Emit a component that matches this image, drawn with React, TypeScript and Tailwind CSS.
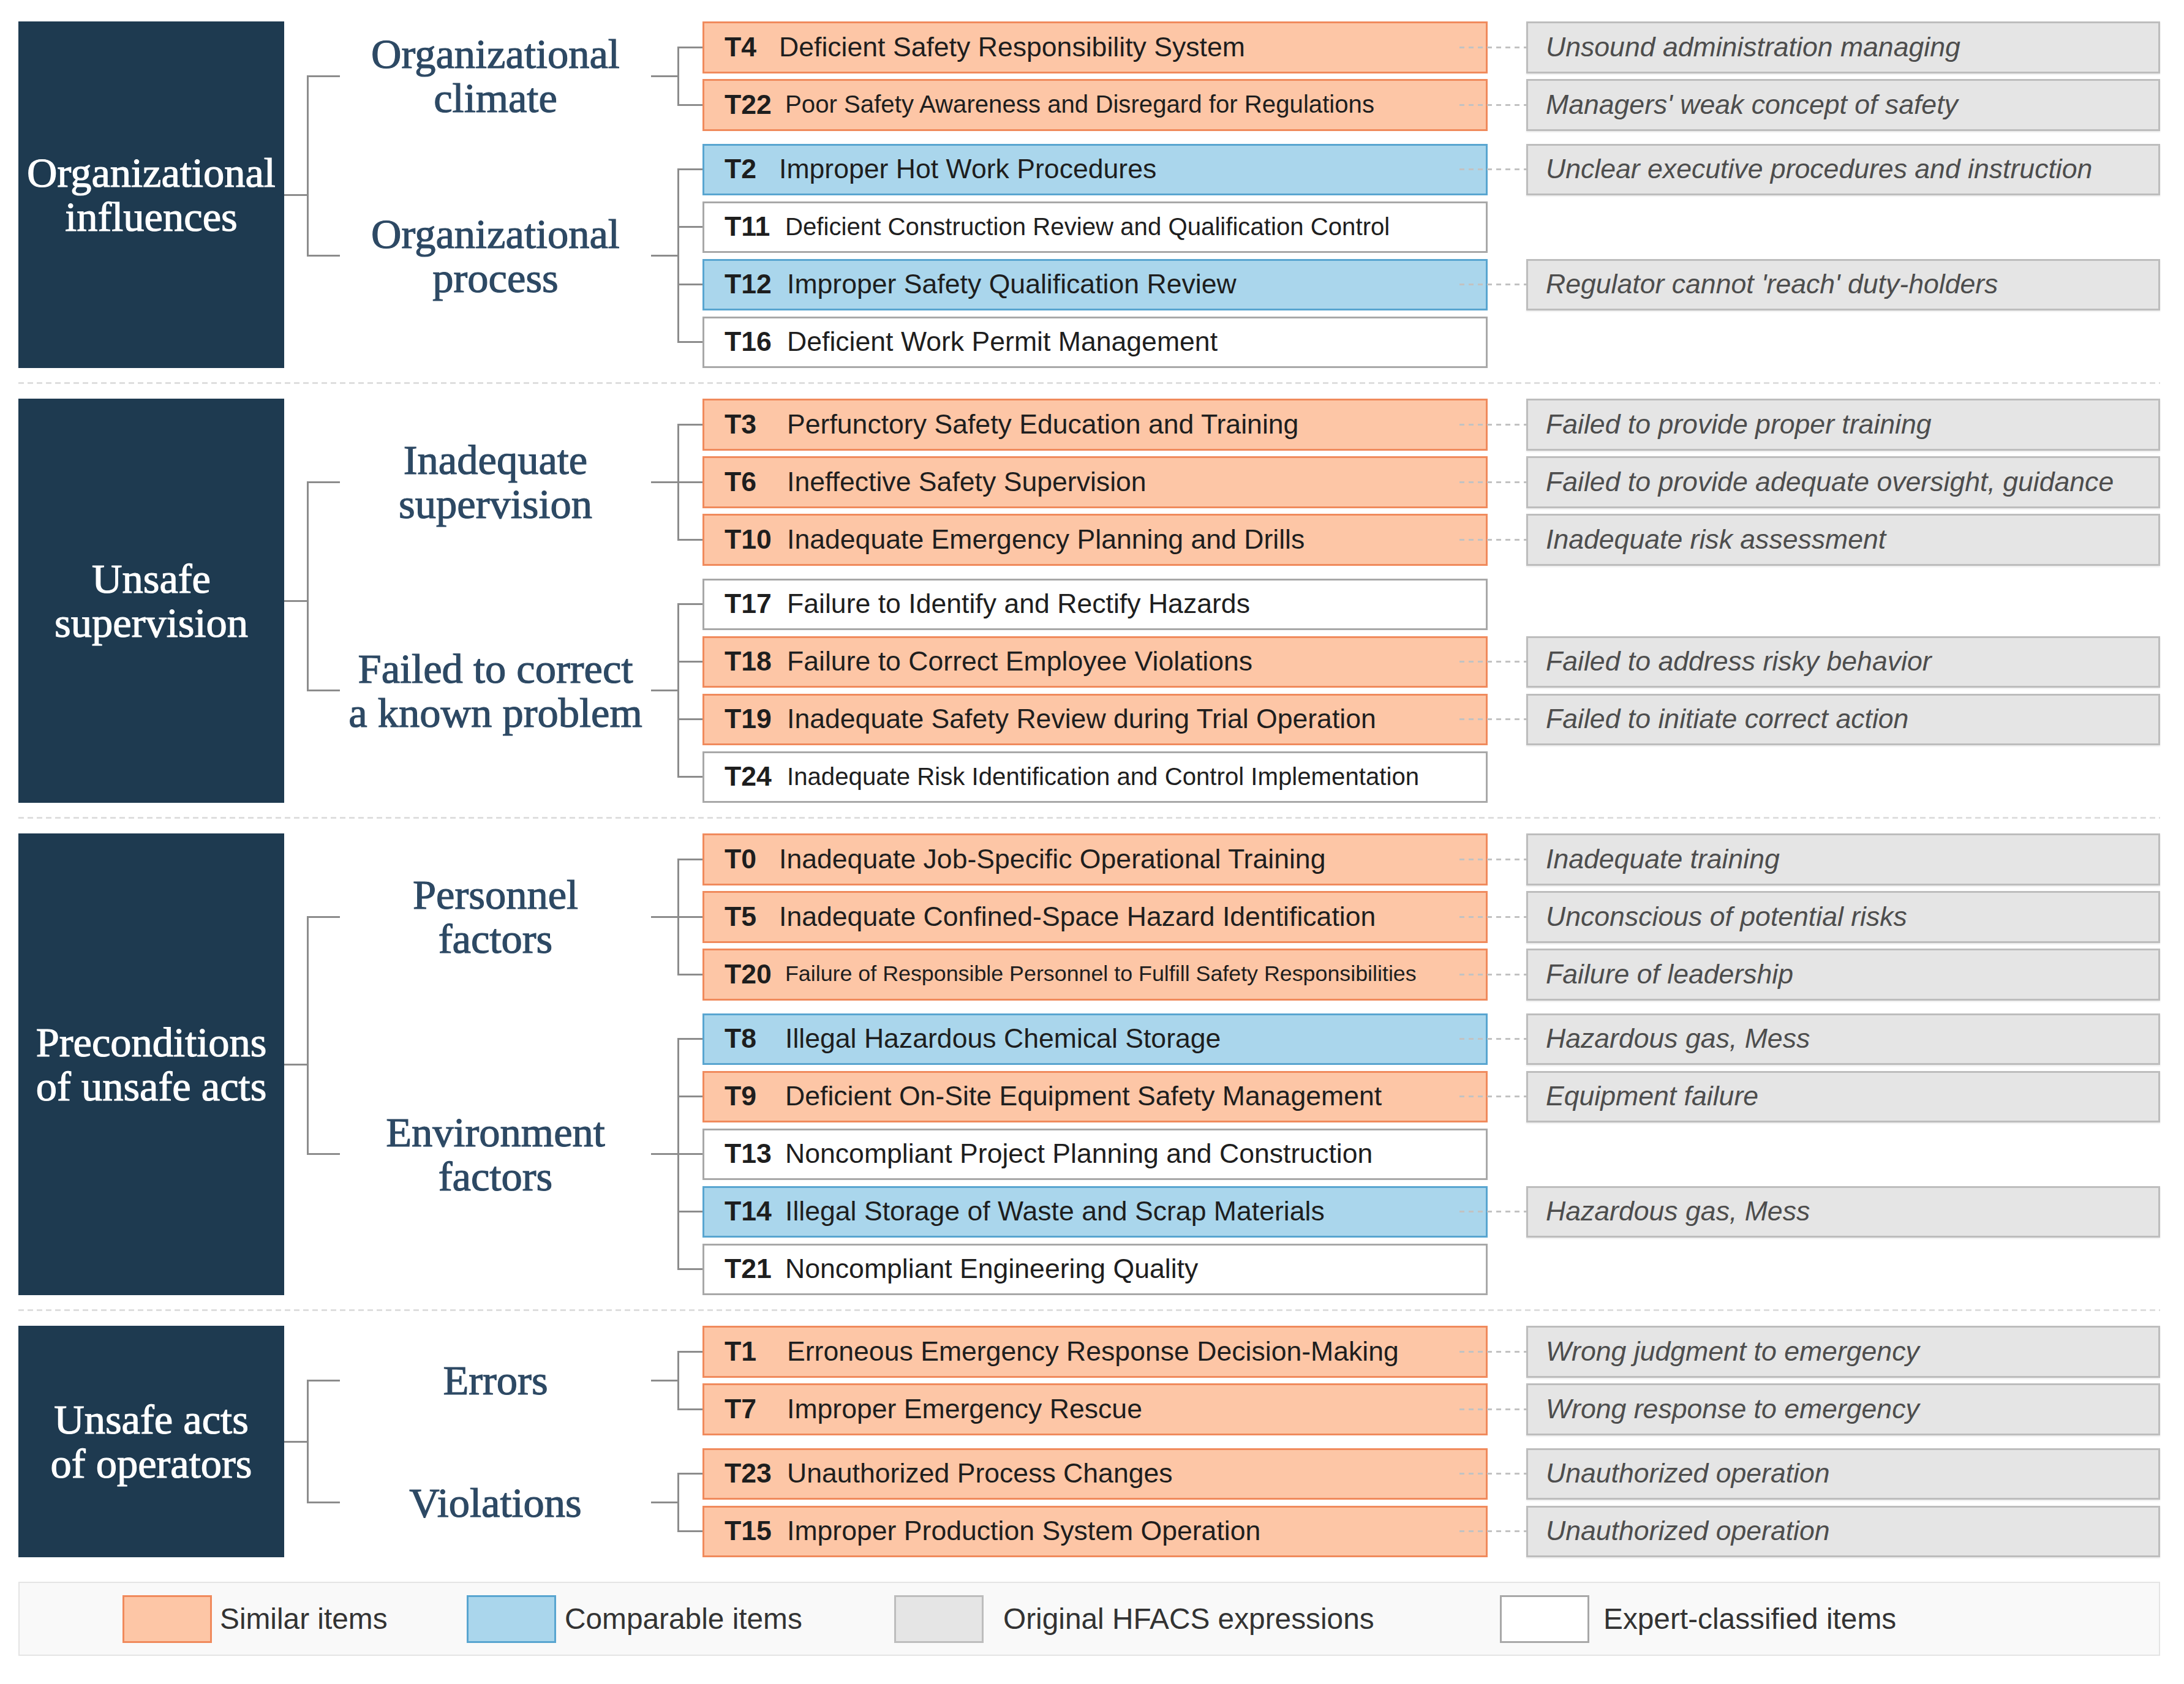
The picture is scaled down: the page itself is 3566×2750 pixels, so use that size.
import React from 'react'

type Kind = 'o' | 'b' | 'w'

interface Item {
  code: string
  text: string
  kind: Kind
  note?: string
  size?: 'md' | 'sm' | 'xs'
  pad?: 'a' | 'b' | 'c'
}

interface Group {
  label: string[]
  items: Item[]
}

interface Section {
  title: string[]
  groups: Group[]
}

const SECTIONS: Section[] = [
  {
    title: ['Organizational', 'influences'],
    groups: [
      {
        label: ['Organizational', 'climate'],
        items: [
          { code: 'T4', text: 'Deficient Safety Responsibility System', kind: 'o', note: 'Unsound administration managing', pad: 'a' },
          { code: 'T22', text: 'Poor Safety Awareness and Disregard for Regulations', kind: 'o', note: "Managers' weak concept of safety", size: 'sm', pad: 'b' },
        ],
      },
      {
        label: ['Organizational', 'process'],
        items: [
          { code: 'T2', text: 'Improper Hot Work Procedures', kind: 'b', note: 'Unclear executive procedures and instruction', pad: 'a' },
          { code: 'T11', text: 'Deficient Construction Review and Qualification Control', kind: 'w', size: 'sm', pad: 'b' },
          { code: 'T12', text: 'Improper Safety Qualification Review', kind: 'b', note: "Regulator cannot 'reach' duty-holders" },
          { code: 'T16', text: 'Deficient Work Permit Management', kind: 'w' },
        ],
      },
    ],
  },
  {
    title: ['Unsafe', 'supervision'],
    groups: [
      {
        label: ['Inadequate', 'supervision'],
        items: [
          { code: 'T3', text: 'Perfunctory Safety Education and Training', kind: 'o', note: 'Failed to provide proper training' },
          { code: 'T6', text: 'Ineffective Safety Supervision', kind: 'o', note: 'Failed to provide adequate oversight, guidance' },
          { code: 'T10', text: 'Inadequate Emergency Planning and Drills', kind: 'o', note: 'Inadequate risk assessment' },
        ],
      },
      {
        label: ['Failed to correct', 'a known problem'],
        items: [
          { code: 'T17', text: 'Failure to Identify and Rectify Hazards', kind: 'w' },
          { code: 'T18', text: 'Failure to Correct Employee Violations', kind: 'o', note: 'Failed to address risky behavior' },
          { code: 'T19', text: 'Inadequate Safety Review during Trial Operation', kind: 'o', note: 'Failed to initiate correct action' },
          { code: 'T24', text: 'Inadequate Risk Identification and Control Implementation', kind: 'w', size: 'sm' },
        ],
      },
    ],
  },
  {
    title: ['Preconditions', 'of unsafe acts'],
    groups: [
      {
        label: ['Personnel', 'factors'],
        items: [
          { code: 'T0', text: 'Inadequate Job-Specific Operational Training', kind: 'o', note: 'Inadequate training', pad: 'a' },
          { code: 'T5', text: 'Inadequate Confined-Space Hazard Identification', kind: 'o', note: 'Unconscious of potential risks', pad: 'a' },
          { code: 'T20', text: 'Failure of Responsible Personnel to Fulfill Safety Responsibilities', kind: 'o', note: 'Failure of leadership', size: 'xs', pad: 'b' },
        ],
      },
      {
        label: ['Environment', 'factors'],
        items: [
          { code: 'T8', text: 'Illegal Hazardous Chemical Storage', kind: 'b', note: 'Hazardous gas, Mess', pad: 'b' },
          { code: 'T9', text: 'Deficient On-Site Equipment Safety Management', kind: 'o', note: 'Equipment failure', pad: 'b' },
          { code: 'T13', text: 'Noncompliant Project Planning and Construction', kind: 'w', pad: 'b' },
          { code: 'T14', text: 'Illegal Storage of Waste and Scrap Materials', kind: 'b', note: 'Hazardous gas, Mess', pad: 'b' },
          { code: 'T21', text: 'Noncompliant Engineering Quality', kind: 'w', pad: 'b' },
        ],
      },
    ],
  },
  {
    title: ['Unsafe acts', 'of operators'],
    groups: [
      {
        label: ['Errors'],
        items: [
          { code: 'T1', text: 'Erroneous Emergency Response Decision-Making', kind: 'o', note: 'Wrong judgment to emergency' },
          { code: 'T7', text: 'Improper Emergency Rescue', kind: 'o', note: 'Wrong response to emergency' },
        ],
      },
      {
        label: ['Violations'],
        items: [
          { code: 'T23', text: 'Unauthorized Process Changes', kind: 'o', note: 'Unauthorized operation' },
          { code: 'T15', text: 'Improper Production System Operation', kind: 'o', note: 'Unauthorized operation' },
        ],
      },
    ],
  },
]

const BOX: Record<Kind, string> = {
  o: 'bg-[#fdc6a6] border-[#f08a5c]',
  b: 'bg-[#aad6ec] border-[#58a5d0]',
  w: 'bg-white border-[#a8a8a8]',
}

const SIZE = {
  md: 'text-[44.6px]',
  sm: 'text-[40.2px]',
  xs: 'text-[35.8px]',
}

const PAD = {
  a: 'w-[89px]',
  b: 'w-[99px]',
  c: 'w-[102px]',
}

const serif = "font-['Liberation_Serif','Times_New_Roman',serif]"
const sans = "font-['Liberation_Sans',Arial,sans-serif]"

// branch stub: vertical line on the left (top/bottom halves) and a horizontal tick at the middle
function Stub({ width, first, last }: { width: string; first: boolean; last: boolean }) {
  return (
    <div className={`${width} shrink-0 flex flex-col`}>
      <div className={`flex-1 ${first ? '' : 'border-l-[3px] border-[#8c8c8c]'}`} />
      <div className="h-[3px] bg-[#8c8c8c]" />
      <div className={`flex-1 ${last ? '' : 'border-l-[3px] border-[#8c8c8c]'}`} />
    </div>
  )
}

function ItemRow({ item, first, last }: { item: Item; first: boolean; last: boolean }) {
  return (
    <div className="flex">
      <Stub width="w-[41px]" first={first} last={last} />
      <div className="flex items-center py-[4.75px]">
        <div className={`w-[1282px] h-[84.5px] border-[3px] ${BOX[item.kind]} flex items-center pl-[33px] text-[#1e1e1e] whitespace-nowrap`}>
          <span className={`${PAD[item.pad ?? 'c']} shrink-0 font-bold text-[44.6px]`}>{item.code}</span>
          <span className={SIZE[item.size ?? 'md']}>{item.text}</span>
        </div>
        {item.note && (
          <>
            <div className="-ml-[46px] w-[109px] h-[3px] bg-[repeating-linear-gradient(90deg,#c2c2c2_0_8px,transparent_8px_15px)]" />
            <div className="w-[1035px] h-[84.5px] border-[3px] border-[#bdbdbd] bg-[#e5e5e5] flex items-center pl-[29px] italic text-[44.6px] text-[#4d4d4d] whitespace-nowrap shadow-[0_2px_2px_rgba(0,0,0,0.08)]">
              {item.note}
            </div>
          </>
        )}
      </div>
    </div>
  )
}

function GroupRow({ group, first, last }: { group: Group; first: boolean; last: boolean }) {
  return (
    <div className="flex">
      <Stub width="w-[54px]" first={first} last={last} />
      <div className={`w-[508px] shrink-0 flex flex-col items-center justify-center ${serif} text-[68.5px] leading-[72px] text-[#2d4964] [-webkit-text-stroke:1.2px_#2d4964]`}>
        {group.label.map(l => (
          <div key={l} className="whitespace-nowrap">{l}</div>
        ))}
      </div>
      <div className="w-[43px] shrink-0 flex items-center">
        <div className="w-full h-[3px] bg-[#8c8c8c]" />
      </div>
      <div className="flex flex-col py-[5.75px]">
        {group.items.map((item, i) => (
          <ItemRow key={item.code} item={item} first={i === 0} last={i === group.items.length - 1} />
        ))}
      </div>
    </div>
  )
}

function SectionBlock({ section }: { section: Section }) {
  return (
    <div className="flex">
      <div className={`w-[434px] shrink-0 bg-[#1e3a50] flex flex-col items-center justify-center ${serif} text-[68.5px] leading-[72px] text-white [-webkit-text-stroke:1.2px_white]`}>
        {section.title.map(t => (
          <div key={t} className="whitespace-nowrap">{t}</div>
        ))}
      </div>
      <div className="w-[37px] shrink-0 flex items-center">
        <div className="w-full h-[3px] bg-[#8c8c8c]" />
      </div>
      <div className="flex flex-col -my-[10.5px]">
        {section.groups.map((g, i) => (
          <GroupRow key={g.label.join(' ')} group={g} first={i === 0} last={i === section.groups.length - 1} />
        ))}
      </div>
    </div>
  )
}

function Separator() {
  return (
    <div className="mt-[23px] mb-[24px] w-[3497px] h-[3px] bg-[repeating-linear-gradient(90deg,#dedede_0_9px,transparent_9px_15px)]" />
  )
}

const LEGEND = [
  { label: 'Similar items', swatch: 'bg-[#fdc6a6] border-[#f08a5c]', width: 'w-[562px]', gap: 'ml-[13px]' },
  { label: 'Comparable items', swatch: 'bg-[#aad6ec] border-[#58a5d0]', width: 'w-[698px]', gap: 'ml-[14px]' },
  { label: 'Original HFACS expressions', swatch: 'bg-[#e5e5e5] border-[#bdbdbd]', width: 'w-[989px]', gap: 'ml-[32px]' },
  { label: 'Expert-classified items', swatch: 'bg-white border-[#a8a8a8]', width: 'w-[600px]', gap: 'ml-[23px]' },
]

export default function App() {
  return (
    <div className={`w-[3566px] h-[2750px] bg-white ${sans}`}>
      <div className="pl-[30px] pt-[35px]">
        {SECTIONS.map((s, i) => (
          <div key={s.title.join(' ')}>
            {i > 0 && <Separator />}
            <SectionBlock section={s} />
          </div>
        ))}

        {/* Legend */}
        <div className="mt-[40px] w-[3497px] h-[121px] bg-[#f9f9f9] border-2 border-[#e4e4e4] flex items-center pl-[168px]">
          {LEGEND.map(l => (
            <div key={l.label} className={`${l.width} flex items-center`}>
              <div className={`w-[146px] h-[78px] border-[3px] shrink-0 ${l.swatch}`} />
              <span className={`${l.gap} text-[47.8px] text-[#333] whitespace-nowrap`}>{l.label}</span>
            </div>
          ))}
        </div>
      </div>
    </div>
  )
}
